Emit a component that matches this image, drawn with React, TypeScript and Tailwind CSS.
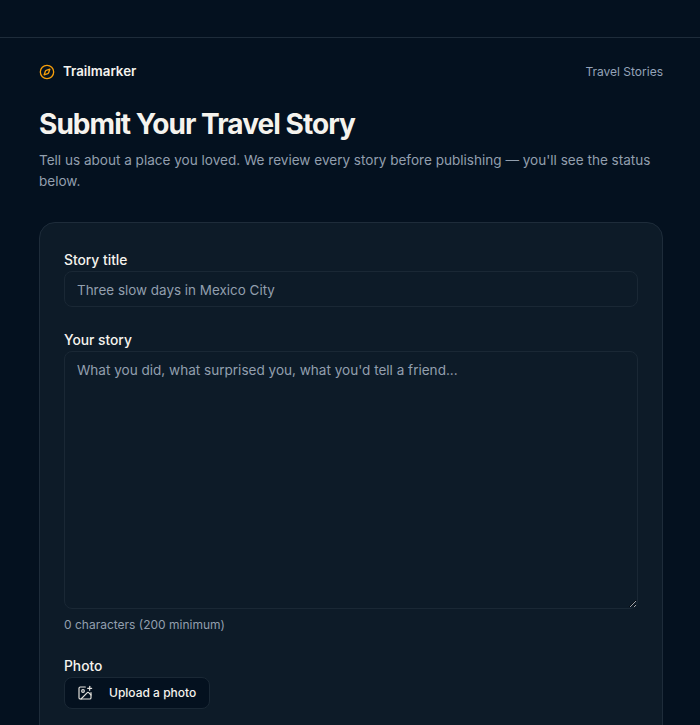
import { Compass, ImagePlus } from "lucide-react";

export default function App() {
  return (
    <div className="h-[725px] overflow-hidden bg-[#04111f] font-['Inter',sans-serif] text-[#f5f3ee] antialiased">
      <div className="h-[38px] border-b border-[#1e2c3a]" />
      <div className="mx-[39px] w-[624px]">
        <header className="mt-6 flex h-5 items-center justify-between">
          <div className="flex items-center gap-2">
            <Compass className="h-4 w-4 text-[#f59e0b]" />
            <span className="text-[13.3px] font-semibold">Trailmarker</span>
          </div>
          <span className="text-xs text-[#94a3b8]">Travel Stories</span>
        </header>
        <h1 className="mt-[24px] text-[28px] leading-9 font-bold tracking-[-0.95px]">Submit Your Travel Story</h1>
        <p className="mt-2 text-[13.56px] leading-[21px] text-[#929fae]">
          Tell us about a place you loved. We review every story before publishing — you'll see the status below.
        </p>
        <form className="mt-[30px] flex flex-col rounded-2xl border border-[#1e2c3a] bg-[#0d1b28] p-6 pt-[27px] pb-10">
          <label className="text-[13.8px] leading-5 font-medium">Story title</label>
          <input
            placeholder="Three slow days in Mexico City"
            className="mt-[1px] h-9 rounded-lg border border-[#1a2835] bg-[#0d1b28] px-3 pt-[2px] text-[13.45px] placeholder:text-[#929fae] outline-none"
          />
          <label className="mt-[23px] text-[13.8px] leading-5 font-medium">Your story</label>
          <textarea
            placeholder="What you did, what surprised you, what you'd tell a friend..."
            className="mt-[1px] h-[258px] rounded-lg border border-[#1a2835] bg-[#0d1b28] px-3 py-2 text-[13.56px] leading-5 placeholder:text-[#929fae] outline-none"
          />
          <p className="mt-2 text-xs leading-4 text-[#929fae]">0 characters (200 minimum)</p>
          <label className="mt-[23px] text-[13.8px] leading-5 font-medium">Photo</label>
          <button
            type="button"
            className="mt-[1px] flex h-8 w-[146px] items-center gap-4 rounded-lg border border-[#1a2835] bg-[#04111f] px-3 text-xs font-medium"
          >
            <ImagePlus className="h-4 w-4 text-[#e5e3de]" strokeWidth={1.75} />
            Upload a photo
          </button>
        </form>
      </div>
    </div>
  );
}
